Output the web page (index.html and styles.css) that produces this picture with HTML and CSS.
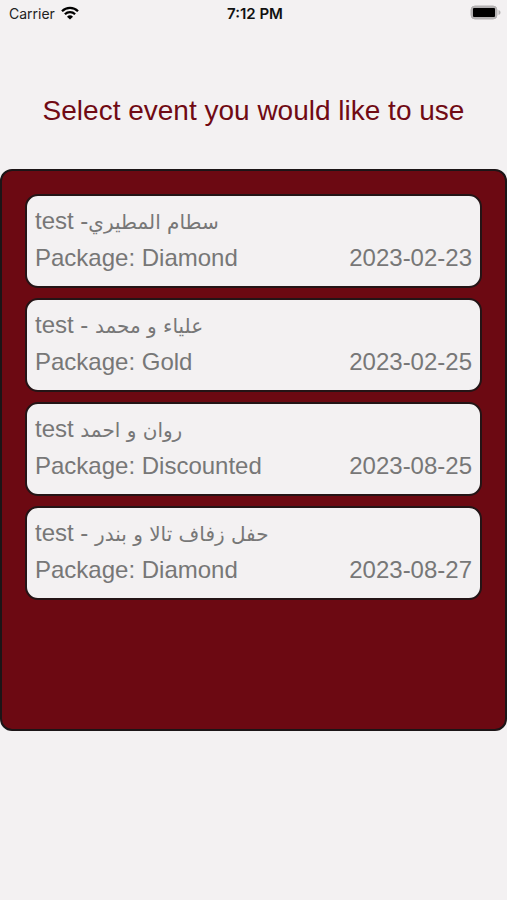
FILE: index.html
```html
<!DOCTYPE html>
<html lang="en">
<head>
<meta charset="utf-8">
<meta name="viewport" content="width=device-width, initial-scale=1">
<title>Select event</title>
<link rel="stylesheet" href="styles.css">
</head>
<body>
<header class="status">
  <div class="carrier">
    <span>Carrier</span>
    <svg class="wifi" viewBox="0 0 18 14" aria-hidden="true">
      <path d="M1 5.2a11.4 11.4 0 0 1 16 0M3.9 8.2a7.3 7.3 0 0 1 10.2 0" fill="none" stroke="#000" stroke-width="2.3"/>
      <path d="M9 13.6 6 10.7a4.3 4.3 0 0 1 6 0z"/>
    </svg>
  </div>
  <time class="clock">7:12 PM</time>
  <svg class="battery" viewBox="0 0 32 16" aria-hidden="true">
    <rect x="2" y="1" width="26" height="13" rx="4" fill="#b3b1b2" stroke="#b3b1b2" stroke-width="1"/>
    <rect x="4" y="3" width="22" height="9" rx="1" fill="#000"/>
    <path d="M29.500 5c1.500.6 2 1.500 2 2.500s-.5 1.900-2 2.500z" fill="#b3b1b2"/>
  </svg>
</header>
<main>
  <h1 class="title">Select event you would like to use</h1>
  <ul class="events">
    <li><button type="button" class="card">
      <span class="name">test -<span class="ar" lang="ar">سطام المطيري</span></span>
      <span class="row"><span>Package: Diamond</span><time>2023-02-23</time></span>
    </button></li>
    <li><button type="button" class="card">
      <span class="name">test - <span class="ar" lang="ar">علياء و محمد</span></span>
      <span class="row"><span>Package: Gold</span><time>2023-02-25</time></span>
    </button></li>
    <li><button type="button" class="card">
      <span class="name">test <span class="ar" lang="ar">روان و احمد</span></span>
      <span class="row"><span>Package: Discounted</span><time>2023-08-25</time></span>
    </button></li>
    <li><button type="button" class="card">
      <span class="name">test - <span class="ar" lang="ar">حفل زفاف تالا و بندر</span></span>
      <span class="row"><span>Package: Diamond</span><time>2023-08-27</time></span>
    </button></li>
  </ul>
</main>
</body>
</html>
```

FILE: styles.css
```css
* {
  box-sizing: border-box;
}

body {
  margin: 0;
  background: #f3f1f2;
  font-family: "Liberation Sans", Arial, sans-serif;
}

.status {
  display: grid;
  grid-template-columns: 1fr auto 1fr;
  align-items: center;
  height: 26px;
  padding: 0 6px 0 9px;
  font-family: Inter, sans-serif;
  font-size: 14px;
  color: #222;
}

.carrier {
  display: flex;
  align-items: center;
  gap: 6px;
}

.wifi {
  width: 18px;
  height: 14px;
}

.clock {
  font-size: 15px;
  font-weight: 600;
  color: #111;
}

.battery {
  width: 32px;
  height: 16px;
  justify-self: end;
}

.title {
  margin: 67px 0 40px;
  font-size: 28px;
  font-weight: 400;
  line-height: 36px;
  text-align: center;
  color: #700a14;
}

.events {
  display: flex;
  flex-direction: column;
  gap: 10px;
  margin: 0;
  padding: 23px 23px 129px;
  border: 2px solid #1c1517;
  border-radius: 12px;
  background: #6c0912;
  list-style: none;
}

.card {
  display: block;
  width: 100%;
  padding: 6px 8px 10px;
  border: 2px solid #241416;
  border-radius: 13px;
  background: #f3f1f2;
  font: 24px/37px "Liberation Sans", Arial, sans-serif;
  color: #777;
  text-align: left;
}

.name,
.row {
  display: flex;
  align-items: baseline;
  height: 37px;
  white-space: pre;
}

.row {
  justify-content: space-between;
}

.ar {
  font-family: "DejaVu Sans", sans-serif;
  font-size: 20px;
}
```
